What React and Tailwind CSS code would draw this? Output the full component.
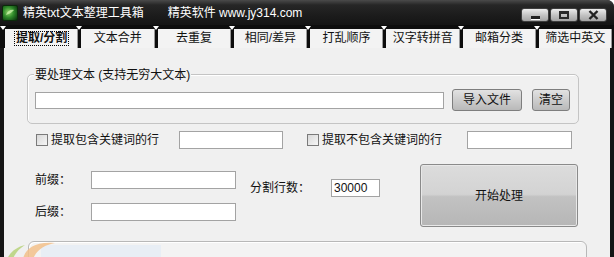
import React from "react";

const tabs = ["提取/分割", "文本合并", "去重复", "相同/差异", "打乱顺序", "汉字转拼音", "邮箱分类", "筛选中英文"];

function AppIcon() {
  return (
    <svg width="16" height="16" viewBox="0 0 16 16" className="shrink-0">
      <defs>
        <radialGradient id="ig" cx="0.4" cy="0.45" r="0.7">
          <stop offset="0" stopColor="#8fd46a" />
          <stop offset="0.5" stopColor="#2f8a2a" />
          <stop offset="1" stopColor="#0d3a10" />
        </radialGradient>
      </defs>
      <rect x="0.5" y="0.5" width="15" height="15" rx="1.5" fill="url(#ig)" stroke="#0a2a0a" />
      <path d="M4 10 C5 6 9 4 12 5 C10 7 8 9 4 10Z" fill="#c9f0a8" opacity="0.8" />
    </svg>
  );
}

function WinButton({ kind }) {
  return (
    <div className="flex h-[14px] w-[28px] items-center justify-center rounded-[3px] border border-[#3e3e3e] bg-[linear-gradient(#ececec,#c4c4c4_50%,#a4a4a4)]">
      {kind === "min" && <div className="mt-[5px] h-[3px] w-[9px] bg-[#222] shadow-[0_1px_0_#fff]" />}
      {kind === "max" && <div className="h-[8px] w-[10px] border-2 border-t-[3px] border-[#2a2a2a]" />}
      {kind === "close" && (
        <svg width="11" height="10" viewBox="0 0 11 10">
          <path d="M1.5 1 L9.5 9 M9.5 1 L1.5 9" stroke="#222" strokeWidth="2.4" />
        </svg>
      )}
    </div>
  );
}

function Tab({ label, active }) {
  return (
    <div className="relative flex h-[19px] flex-1 items-center justify-center bg-[#f3f3f3] shadow-[inset_-1px_0_0_#9a9a9a]">
      <span className="absolute left-[-5px] top-[-3px] h-0 w-0 border-x-[3px] border-t-[4px] border-x-transparent border-t-white" />
      {active ? (
        <span className="border border-dotted border-black px-[1px] leading-[13px] font-bold">{label}</span>
      ) : (
        <span className="leading-[13px]">{label}</span>
      )}
    </div>
  );
}

function CheckLabel({ text, className }) {
  return (
    <div className={"flex items-center " + className}>
      <div className="h-[12px] w-[12px] border border-[#7a7a7a] bg-[linear-gradient(135deg,#d8d8d8,#f6f6f6)]" />
      <span className="ml-[3px]">{text}</span>
    </div>
  );
}

function Field({ className, value = "" }) {
  return (
    <input
      readOnly
      value={value}
      className={"border border-[#a3a3a3] bg-white px-[2px] text-[12px] outline-none " + className}
    />
  );
}

export default function App() {
  return (
    <div className="h-[257px] w-[614px] overflow-hidden bg-white font-['Liberation_Sans','Noto_Sans_CJK_SC',sans-serif] text-[12px] text-[#111]">
      <div className="flex h-full flex-col rounded-tr-[7px] bg-[#0d0d0d]">
        {/* title bar */}
        <div className="flex h-[25px] shrink-0 items-center rounded-tr-[7px] bg-[linear-gradient(#4a4a4a,#262626_20%,#1c1c1c_60%,#141414)] pl-[2px] pr-[7px]">
          <AppIcon />
          <span className="ml-[5px] text-white">精英txt文本整理工具箱</span>
          <span className="ml-[24px] text-white">精英软件 www.jy314.com</span>
          <div className="ml-auto mt-[4px] flex gap-[1px]">
            <WinButton kind="min" />
            <WinButton kind="max" />
            <WinButton kind="close" />
          </div>
        </div>

        {/* tabs */}
        <div className="flex h-[23px] shrink-0 gap-[3px] pl-[5px] pr-[2px] pt-[4px]">
          {tabs.map((t, i) => (
            <Tab key={t} label={t} active={i === 0} />
          ))}
        </div>

        {/* body */}
        <div className="flex-1 border-l-4 border-r-4 border-[#151515] bg-[#f0f0f0]">
          {/* source text group */}
          <div className="relative ml-[23px] mt-[26px] h-[50px] w-[552px] rounded-[5px] border border-[#c4c4c4] pl-[7px] pt-[14px] shadow-[inset_1px_1px_0_#fff]">
            <span className="absolute left-[6px] top-[-7px] bg-[#f0f0f0] px-[1px] leading-[14px]">要处理文本 (支持无穷大文本)</span>
            <div className="flex items-center">
              <Field className="h-[17px] w-[409px]" />
              <button className="ml-[8px] h-[22px] w-[70px] rounded-[3px] border border-[#7e7e7e] bg-[linear-gradient(#e2e2e2,#cdcdcd_50%,#b9b9b9)] text-[12px]">导入文件</button>
              <button className="ml-[10px] h-[22px] w-[38px] rounded-[3px] border border-[#7e7e7e] bg-[linear-gradient(#e2e2e2,#cdcdcd_50%,#b9b9b9)] text-[12px]">清空</button>
            </div>
          </div>

          {/* keyword filters */}
          <div className="ml-[32px] mt-[7px] flex h-[18px] items-center">
            <CheckLabel text="提取包含关键词的行" className="w-[143px]" />
            <Field className="h-[18px] w-[104px]" />
            <CheckLabel text="提取不包含关键词的行" className="ml-[24px] w-[160px]" />
            <Field className="h-[18px] w-[105px]" />
          </div>

          {/* prefix / suffix / split */}
          <div className="mt-[15px] flex">
            <div className="ml-[31px] mt-[7px] flex flex-col gap-[14px]">
              <div className="flex h-[18px] items-center">
                <span className="w-[56px]">前缀：</span>
                <Field className="h-[18px] w-[145px]" />
              </div>
              <div className="flex h-[18px] items-center">
                <span className="w-[56px]">后缀：</span>
                <Field className="h-[18px] w-[145px]" />
              </div>
            </div>
            <div className="ml-[14px] mt-[15px] flex h-[18px] items-center">
              <span className="w-[81px]">分割行数：</span>
              <Field value="30000" className="h-[18px] w-[49px]" />
            </div>
            <button className="ml-[40px] h-[63px] w-[158px] rounded-[3px] border border-[#8a8a8a] bg-[linear-gradient(#dcdcdc,#d3d3d3_48%,#c2c2c2_52%,#b6b6b6)] text-[12px] shadow-[inset_0_0_0_1px_#e8e8e8]">开始处理</button>
          </div>

          {/* log group */}
          <div className="relative ml-[24px] mt-[14px] h-[30px] w-[559px] rounded-t-[6px] border border-[#b8b8b8] bg-[#f3f3f3] shadow-[inset_1px_1px_0_#fff]">
            <div className="ml-[12px] mt-[3px] h-[20px] w-[120px] bg-[#e8eef5]" />
            <svg width="60" height="20" viewBox="0 0 60 20" className="absolute left-[-24px] top-[-3px]">
              <path d="M2 20 C6 12 12 8 20 6 C14 10 10 14 8 20Z" fill="#b7d27a" opacity="0.85" />
              <path d="M18 20 C20 10 30 2 50 4 C40 6 32 10 28 20Z" fill="#f2c089" opacity="0.85" />
            </svg>
          </div>
        </div>
      </div>
    </div>
  );
}
